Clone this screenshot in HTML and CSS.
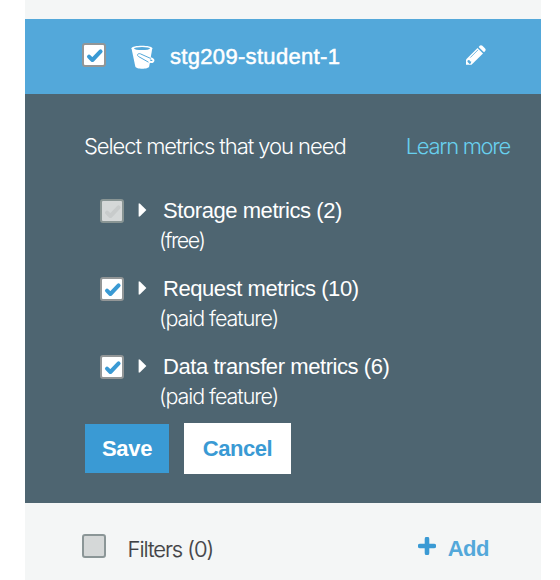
FILE: index.html
```
<!DOCTYPE html>
<html lang="en">
<head>
<meta charset="utf-8">
<title>Bucket metrics</title>
<link rel="stylesheet" href="styles.css">
</head>
<body>
<svg width="0" height="0" class="defs"><defs>
<symbol id="tick" viewBox="0 0 24 24"><path d="M7 13.6l3.4 3.4 8.2-8.6" fill="none" stroke="currentColor" stroke-width="4" stroke-linecap="round" stroke-linejoin="round"/></symbol>
<symbol id="arrow" viewBox="0 0 9 14"><path d="M.6.4L1.8.4 8.4 7l-6.6 6.6H.6z" fill="#fff"/></symbol>
</defs></svg>
<main class="column">
  <header class="bucket">
    <span class="check check-on"><svg><use href="#tick"/></svg></span>
    <svg class="bucket-icon" viewBox="0 0 24 24">
      <path d="M.5 3.2C.5-.2 21.3-.2 21.3 3.2L18.2 21.4C17.5 24.4 5 24.4 4.3 21.4z" fill="#fff"/>
      <ellipse cx="11" cy="3.6" rx="8" ry="1.5" fill="#53a8da"/>
      <path d="M19.5 13.2Q23.5 14.6 22 16.4Q20.5 17.8 16 16" fill="none" stroke="#fff" stroke-width="2"/>
      <path d="M19.6 13.4L9.3 8.8C6.8 8 5.5 10.2 7.5 11.5L17.5 17.2" fill="none" stroke="#53a8da" stroke-width="1"/>
    </svg>
    <h1>stg209-student-1</h1>
    <svg class="pencil" viewBox="0 0 20 20">
      <path d="M0 19.8V14.4L11.5 3 17 8.5 5.5 19.8z" fill="#fff"/>
      <path d="M12.6 1.9L14 .6Q15.2-.3 16.4.8L19.1 3.5Q20.2 4.7 19.2 5.9L18 7.3z" fill="#fff"/>
      <path d="M4.3 12.6L12 4.9" stroke="#53a8da" stroke-width=".8"/>
      <path d="M1.8 15.2l1.7-.3.3 1.4 1.5.3-.4 1.7-1.3.6-2.2-2.2z" fill="#53a8da"/>
    </svg>
  </header>
  <section class="panel">
    <div class="intro"><span class="select">Select metrics that you need</span><a class="learn">Learn more</a></div>
    <ul class="metrics">
      <li><span class="check check-disabled"><svg><use href="#tick"/></svg></span><svg class="arrow"><use href="#arrow"/></svg><div><p class="name">Storage metrics (2)</p><p class="note note-free">(free)</p></div></li>
      <li><span class="check check-on"><svg><use href="#tick"/></svg></span><svg class="arrow"><use href="#arrow"/></svg><div><p class="name">Request metrics (10)</p><p class="note">(paid feature)</p></div></li>
      <li><span class="check check-on"><svg><use href="#tick"/></svg></span><svg class="arrow"><use href="#arrow"/></svg><div><p class="name">Data transfer metrics (6)</p><p class="note">(paid feature)</p></div></li>
    </ul>
    <div class="actions"><button class="save">Save</button><button class="cancel">Cancel</button></div>
  </section>
  <footer class="filters">
    <span class="check"></span>
    <span class="filters-label">Filters (0)</span>
    <svg class="plus" viewBox="0 0 18 18"><path d="M9 2v14M2 9h14" stroke="#3a9ad4" stroke-width="4.6" stroke-linecap="round"/></svg>
    <a class="add">Add</a>
  </footer>
</main>
</body>
</html>
```
FILE: styles.css
```
* { box-sizing: border-box; }
body {
  margin: 0;
  background: #fff;
  font: 22px/30px "Liberation Sans", Arial, sans-serif;
  color: #fff;
  white-space: nowrap;
}
.defs { position: absolute; }
h1, p, ul { margin: 0; padding: 0; }
ul { list-style: none; }
svg { display: block; flex: none; }
.column {
  width: 516px;
  height: 580px;
  margin-left: 25px;
  padding-top: 19px;
  background: #f4f6f6;
  overflow: hidden;
}
.check {
  display: block;
  flex: none;
  width: 24px;
  height: 24px;
  border: 2px solid #8b9697;
  border-radius: 3px;
  background: #d5d8d8;
}
.check svg { width: 24px; height: 24px; margin: -2px; }
.check-on { background: #fff; color: #3a9ad4; border-color: #929697; }
.check-disabled { color: #c8cbcb; border-color: #899594; }
.bucket {
  display: flex;
  height: 75px;
  padding: 24px 55px 0 57px;
  background: #53a8da;
}
.bucket-icon { width: 24px; height: 24px; margin: 2px 15px 0 25px; }
h1 {
  flex: 1;
  margin-top: -1px;
  font-size: 22px;
  font-weight: 400;
  letter-spacing: .32px;
  -webkit-text-stroke: .5px #fff;
}
.pencil { width: 20px; height: 20px; margin-top: 2px; }
.panel {
  height: 409px;
  padding: 37px 31px 0 60px;
  background: #4e6571;
}
.intro {
  display: flex;
  justify-content: space-between;
  font-family: Inter, sans-serif;
  font-weight: 300;
}
.select { margin-left: -1px; letter-spacing: -1.06px; }
.learn { color: #68d0ee; letter-spacing: -1.3px; }
.metrics {
  display: grid;
  gap: 18px;
  margin-top: 34px;
  padding-left: 15px;
}
.metrics li { display: flex; height: 60px; }
.metrics .check { margin-top: 4px; }
.arrow { width: 9px; height: 14px; margin: 8px 15px 0 14px; }
.name { margin: 1px 0 -1px 1px; letter-spacing: -.43px; }
.note {
  margin-left: -3px;
  font-family: Inter, sans-serif;
  font-size: 21.5px;
  font-weight: 300;
  letter-spacing: -1.06px;
}
.note-free { letter-spacing: -1.5px; }
.actions { display: flex; align-items: center; gap: 15px; margin-top: 12px; }
button {
  border: 0;
  padding: 0;
  font: bold 22px/30px "Liberation Sans", Arial, sans-serif;
}
.save { width: 84px; height: 49px; padding-top: 1px; background: #3a9ad4; color: #fff; letter-spacing: -.3px; }
.cancel { width: 107px; height: 51px; padding-top: 1px; background: #fff; color: #3a9ad4; letter-spacing: -.45px; }
.filters { display: flex; padding: 31px 52px 0 57px; color: #3f4144; }
.filters-label {
  flex: 1;
  margin: 0 0 0 21.5px;
  font-family: Inter, sans-serif;
  font-weight: 300;
  letter-spacing: -1.05px;
  -webkit-text-stroke: .2px #3f4144;
}
.plus { width: 18px; height: 18px; margin: 3px 12px 0 0; }
.add { font-weight: 700; color: #53a8da; letter-spacing: -.5px; }
```
